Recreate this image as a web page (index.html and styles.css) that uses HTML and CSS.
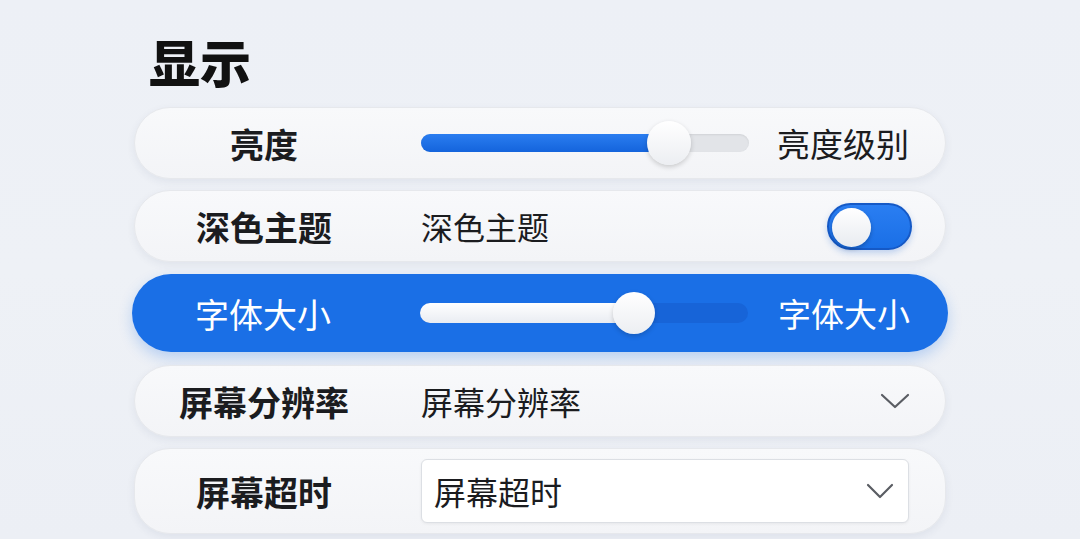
FILE: index.html
```html
<!DOCTYPE html>
<html lang="zh-CN">
<head>
  <meta charset="UTF-8">
  <title>显示</title>
  <link rel="stylesheet" href="styles.css">
</head>
<body>
  <div class="panel">
    <h1 class="title">显示</h1>

    <div class="row">
      <div class="label">亮度</div>
      <div class="slider">
        <div class="fill" style="width: 247px;"></div>
        <div class="thumb" style="left: 226px;"></div>
      </div>
      <div class="end-text">亮度级别</div>
    </div>

    <div class="row">
      <div class="label">深色主题</div>
      <div class="value">深色主题</div>
      <div class="toggle"><div class="knob"></div></div>
    </div>

    <div class="row active">
      <div class="label">字体大小</div>
      <div class="slider">
        <div class="fill" style="width: 214px;"></div>
        <div class="thumb" style="left: 193px;"></div>
      </div>
      <div class="end-text">字体大小</div>
    </div>

    <div class="row">
      <div class="label">屏幕分辨率</div>
      <div class="value">屏幕分辨率</div>
      <svg class="chevron" width="30" height="16" viewBox="0 0 30 16">
        <polyline points="2,2 15,14 28,2" fill="none" stroke="#5a5d63" stroke-width="2.2" stroke-linecap="round" stroke-linejoin="round"/>
      </svg>
    </div>

    <div class="row tall">
      <div class="label">屏幕超时</div>
      <div class="select">
        <span>屏幕超时</span>
        <svg class="chevron" width="28" height="16" viewBox="0 0 28 16">
          <polyline points="2,2 14,14 26,2" fill="none" stroke="#5a5d63" stroke-width="2.2" stroke-linecap="round" stroke-linejoin="round"/>
        </svg>
      </div>
    </div>
  </div>
</body>
</html>
```

FILE: styles.css
```css
body {
  margin: 0;
  height: 539px;
  overflow: hidden;
  font-family: "Noto Sans CJK SC", "Noto Sans", sans-serif;
  color: #1b1c1f;
  background: linear-gradient(180deg, #edf0f6 0%, #eef1f6 50%, #eceff5 100%);
}

.panel {
  width: 812px;
  margin-left: 134px;
  padding-top: 31px;
  display: flex;
  flex-direction: column;
  gap: 12px;
}

.title {
  margin: 0 0 4px 15px;
  font-size: 51px;
  line-height: 60px;
  font-weight: 900;
  color: #111;
}

.row {
  height: 72px;
  flex-shrink: 0;
  box-sizing: border-box;
  display: flex;
  align-items: center;
  padding-right: 36px;
  border-radius: 36px;
  background: linear-gradient(180deg, #f8f9fb 0%, #f3f4f7 100%);
  border: 1px solid #e6e8ec;
  box-shadow: 0 3px 8px rgba(40, 60, 100, 0.07);
}

.row + .row {
  margin-top: -1px;
}

.row.active {
  height: 78px;
  margin: 0 -2px 2px;
  padding-left: 2px;
  padding-right: 38px;
  border-radius: 40px;
  border: none;
  background: #1a6fe6;
  color: #fff;
  box-shadow: 0 6px 14px rgba(26, 111, 230, 0.25);
}

.row.tall {
  height: 86px;
}

.label {
  width: 258px;
  flex-shrink: 0;
  text-align: center;
  font-size: 34px;
  font-weight: 700;
}

.row.active .label {
  font-weight: 400;
}

.value {
  margin-left: 28px;
  font-size: 32px;
  flex: 1;
}

.end-text {
  margin-left: auto;
  font-size: 33px;
}

.slider {
  position: relative;
  margin-left: 28px;
  width: 328px;
  height: 18px;
  border-radius: 9px;
  background: #e2e4e8;
  box-shadow: inset 0 1px 2px rgba(0, 0, 0, 0.08);
}

.slider .fill {
  height: 100%;
  border-radius: 9px;
  background: linear-gradient(180deg, #2a7df0 0%, #1464dc 100%);
}

.slider .thumb {
  position: absolute;
  top: -13px;
  width: 44px;
  height: 44px;
  border-radius: 50%;
  background: linear-gradient(180deg, #ffffff 0%, #eceef2 100%);
  box-shadow: 0 2px 5px rgba(0, 0, 0, 0.18);
}

.row.active .slider {
  height: 20px;
  border-radius: 10px;
  background: #1764d8;
  box-shadow: none;
}

.row.active .slider .fill {
  border-radius: 10px;
  background: linear-gradient(180deg, #ffffff 0%, #e9ecf2 100%);
}

.row.active .slider .thumb {
  top: -11px;
  width: 42px;
  height: 42px;
}

.toggle {
  width: 85px;
  height: 47px;
  box-sizing: border-box;
  padding: 3px;
  border-radius: 24px;
  background: linear-gradient(180deg, #2a7ef2 0%, #1a6fe6 100%);
  border: 2px solid #1559c6;
  box-shadow: 0 3px 6px rgba(26, 100, 210, 0.25);
  margin-right: -3px;
}

.toggle .knob {
  width: 39px;
  height: 39px;
  border-radius: 50%;
  background: linear-gradient(180deg, #ffffff 0%, #e8ebf0 100%);
  box-shadow: 0 2px 4px rgba(0, 0, 0, 0.25);
}

.chevron {
  display: block;
  margin-right: -1px;
}

.select {
  margin-left: 28px;
  flex: 1;
  height: 64px;
  box-sizing: border-box;
  display: flex;
  align-items: center;
  justify-content: space-between;
  padding: 0 12px 0 12px;
  background: #fff;
  border: 1px solid #dcdfe4;
  border-radius: 6px;
  box-shadow: 0 1px 3px rgba(0, 0, 0, 0.06);
  font-size: 32px;
}

.select .chevron {
  margin-right: 2px;
}
```
